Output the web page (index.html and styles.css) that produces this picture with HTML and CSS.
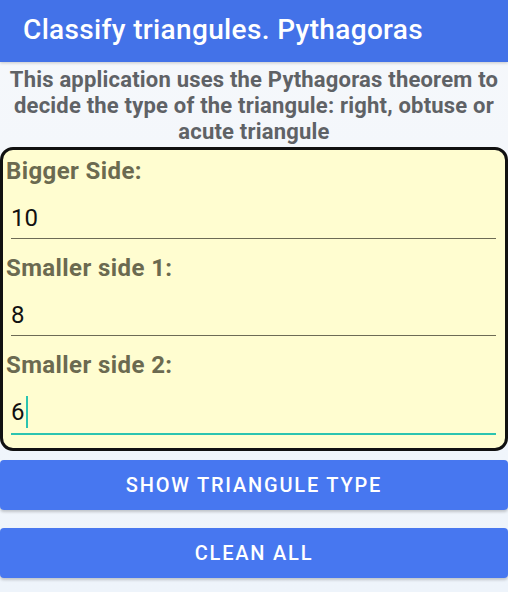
FILE: index.html
```html
<!DOCTYPE html>
<html lang="en">
<head>
<meta charset="utf-8">
<title>Classify triangules. Pythagoras</title>
<link rel="stylesheet" href="styles.css">
</head>
<body>
<header class="appbar">
  <h1 class="appbar-title">Classify triangules. Pythagoras</h1>
</header>
<main class="content">
  <p class="intro">This application uses the Pythagoras theorem to decide the type of the triangule: right, obtuse or acute triangule</p>
  <section class="card">
    <div class="field">
      <div class="label">Bigger Side:</div>
      <div class="input">10</div>
    </div>
    <div class="field">
      <div class="label">Smaller side 1:</div>
      <div class="input">8</div>
    </div>
    <div class="field">
      <div class="label">Smaller side 2:</div>
      <div class="input input-focused">6<span class="caret"></span></div>
    </div>
  </section>
  <div class="actions">
    <button class="btn" type="button">Show triangule type</button>
    <button class="btn" type="button">Clean all</button>
  </div>
</main>
</body>
</html>
```

FILE: styles.css
```css
html, body {
  margin: 0;
  padding: 0;
}
body {
  width: 508px;
  height: 592px;
  overflow: hidden;
  font-family: Roboto, "Liberation Sans", Arial, sans-serif;
  background: linear-gradient(180deg, #f6f8fb 0%, #eef4fb 100%);
}
.appbar {
  height: 62px;
  background: #4372e8;
  display: flex;
  align-items: center;
  padding-left: 23px;
  box-shadow: 0 1px 3px rgba(0,0,0,0.2);
}
.appbar-title {
  margin: 0;
  color: #ffffff;
  font-size: 28px;
  letter-spacing: 0.35px;
  font-weight: 500;
  line-height: 32px;
  margin-top: -3px;
}
.content {
  display: flex;
  flex-direction: column;
}
.intro {
  margin: 5px 0 2px;
  text-align: center;
  color: #5f6266;
  font-weight: 700;
  font-size: 22px;
  letter-spacing: 0.2px;
  line-height: 26px;
}
.card {
  background: #fffdd0;
  border: 3px solid #111111;
  border-radius: 13px;
  padding: 2px 0 13px;
}
.field + .field .label {
  margin-top: 10px;
}
.label {
  color: #6b6a50;
  font-weight: 700;
  font-size: 24px;
  letter-spacing: 0.4px;
  line-height: 38px;
  padding-left: 3px;
}
.input {
  margin: 0 9px 0 8px;
  padding: 15px 0 7px;
  font-size: 24px;
  line-height: 26px;
  height: 26px;
  color: #111111;
  border-bottom: 1px solid #6d6b55;
  display: flex;
  align-items: center;
}
.input-focused {
  padding-bottom: 8px;
  border-bottom: 2px solid #2bc4b0;
}
.caret {
  display: inline-block;
  width: 2px;
  height: 32px;
  margin: -3px 0 -3px 1px;
  background: #2bc4b0;
}
.actions {
  display: flex;
  flex-direction: column;
  gap: 18px;
  margin-top: 9px;
}
.btn {
  height: 50px;
  border: none;
  border-radius: 4px;
  background: #4777f0;
  color: #ffffff;
  font-family: Roboto, "Liberation Sans", Arial, sans-serif;
  font-size: 20px;
  font-weight: 500;
  letter-spacing: 0.09em;
  text-transform: uppercase;
  box-shadow: 0 2px 3px rgba(0,0,0,0.2);
  padding: 0;
}
```
